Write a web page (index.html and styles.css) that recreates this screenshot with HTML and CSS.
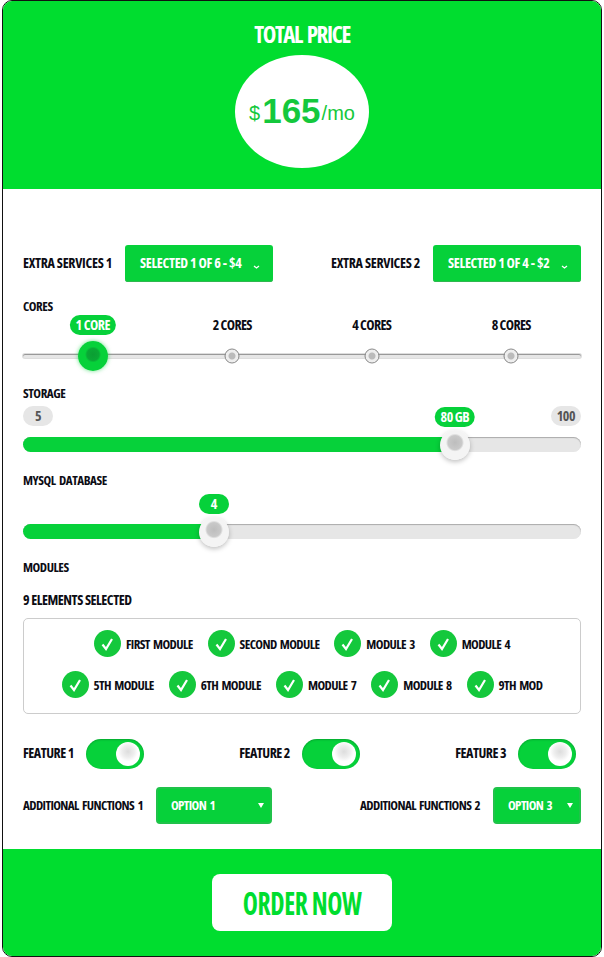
FILE: index.html
```html
<!DOCTYPE html>
<html lang="en">
<head>
    <meta charset="UTF-8">
    <meta name="viewport" content="width=device-width, initial-scale=1.0">
    <title>Total Price</title>
    <link rel="stylesheet" href="styles.css">
</head>
<body>
    <div class="card">
        <header class="top">
            <h1>Total Price</h1>
            <div class="price"><span class="unit">$</span><strong>165</strong><span class="unit">/mo</span></div>
        </header>

        <main class="content">
            <div class="row services">
                <div class="field">
                    <span class="label">Extra Services 1</span>
                    <button class="dropdown" type="button"><span>Selected 1 of 6 - $4</span>
                        <svg width="7" height="4" viewBox="0 0 7 4"><path d="M1 1l2.5 2L6 1" fill="none" stroke="#fff" stroke-width="1.3"/></svg>
                    </button>
                </div>
                <div class="field">
                    <span class="label">Extra Services 2</span>
                    <button class="dropdown" type="button"><span>Selected 1 of 4 - $2</span>
                        <svg width="7" height="4" viewBox="0 0 7 4"><path d="M1 1l2.5 2L6 1" fill="none" stroke="#fff" stroke-width="1.3"/></svg>
                    </button>
                </div>
            </div>

            <div class="label section cores-label">Cores</div>
            <div class="slider thin">
                <div class="track">
                    <span class="pill on" style="left:12.5%">1 Core</span>
                    <span class="tick-text" style="left:37.5%">2 Cores</span>
                    <span class="tick-text" style="left:62.5%">4 Cores</span>
                    <span class="tick-text" style="left:87.5%">8 Cores</span>
                    <span class="tick" style="left:37.5%"></span>
                    <span class="tick" style="left:62.5%"></span>
                    <span class="tick" style="left:87.5%"></span>
                    <span class="handle green" style="left:12.5%"></span>
                </div>
            </div>

            <div class="label section storage-label">Storage</div>
            <div class="slider">
                <div class="track">
                    <span class="fill" style="width:77.4%"></span>
                    <span class="pill min">5</span>
                    <span class="pill max">100</span>
                    <span class="pill on" style="left:77.4%">80 GB</span>
                    <span class="handle" style="left:77.4%"></span>
                </div>
            </div>

            <div class="label section mysql-label">MySQL Database</div>
            <div class="slider">
                <div class="track">
                    <span class="fill" style="width:34.2%"></span>
                    <span class="pill on" style="left:34.2%">4</span>
                    <span class="handle" style="left:34.2%"></span>
                </div>
            </div>

            <div class="label section modules-label">Modules</div>
            <div class="label section count-label">9 Elements Selected</div>
            <div class="modules">
                <div class="module-row">
                    <label class="module"><svg class="check" viewBox="0 0 27 27"><circle cx="13.5" cy="13.5" r="13.5"/><path d="M8.5 14.5l3.5 4.5 6-10"/></svg>First Module</label>
                    <label class="module"><svg class="check" viewBox="0 0 27 27"><circle cx="13.5" cy="13.5" r="13.5"/><path d="M8.5 14.5l3.5 4.5 6-10"/></svg>Second Module</label>
                    <label class="module"><svg class="check" viewBox="0 0 27 27"><circle cx="13.5" cy="13.5" r="13.5"/><path d="M8.5 14.5l3.5 4.5 6-10"/></svg>Module 3</label>
                    <label class="module"><svg class="check" viewBox="0 0 27 27"><circle cx="13.5" cy="13.5" r="13.5"/><path d="M8.5 14.5l3.5 4.5 6-10"/></svg>Module 4</label>
                </div>
                <div class="module-row">
                    <label class="module"><svg class="check" viewBox="0 0 27 27"><circle cx="13.5" cy="13.5" r="13.5"/><path d="M8.5 14.5l3.5 4.5 6-10"/></svg>5th Module</label>
                    <label class="module"><svg class="check" viewBox="0 0 27 27"><circle cx="13.5" cy="13.5" r="13.5"/><path d="M8.5 14.5l3.5 4.5 6-10"/></svg>6th Module</label>
                    <label class="module"><svg class="check" viewBox="0 0 27 27"><circle cx="13.5" cy="13.5" r="13.5"/><path d="M8.5 14.5l3.5 4.5 6-10"/></svg>Module 7</label>
                    <label class="module"><svg class="check" viewBox="0 0 27 27"><circle cx="13.5" cy="13.5" r="13.5"/><path d="M8.5 14.5l3.5 4.5 6-10"/></svg>Module 8</label>
                    <label class="module"><svg class="check" viewBox="0 0 27 27"><circle cx="13.5" cy="13.5" r="13.5"/><path d="M8.5 14.5l3.5 4.5 6-10"/></svg>9th Mod</label>
                </div>
            </div>

            <div class="row features">
                <div class="field"><span class="label">Feature 1</span><span class="toggle"></span></div>
                <div class="field"><span class="label">Feature 2</span><span class="toggle"></span></div>
                <div class="field"><span class="label">Feature 3</span><span class="toggle"></span></div>
            </div>

            <div class="row functions">
                <div class="field"><span class="label">Additional Functions 1</span><button class="select wide" type="button">Option 1</button></div>
                <div class="field"><span class="label">Additional Functions 2</span><button class="select" type="button">Option 3</button></div>
            </div>
        </main>

        <footer class="bottom">
            <button class="order" type="button"><span>Order Now</span></button>
        </footer>
    </div>
</body>
</html>
```

FILE: styles.css
```css
body {
    margin: 0;
    background-color: #fff;
    font-family: "Open Sans", "Liberation Sans", Arial, sans-serif;
    font-stretch: 75%;
    color: #0c0c14;
}

button {
    font-stretch: 75%;
}

.card {
    box-sizing: border-box;
    width: 600px;
    height: 957px;
    margin-left: 2px;
    display: flex;
    flex-direction: column;
    border: 1px solid #111;
    border-radius: 10px;
    overflow: hidden;
}

.top {
    height: 188px;
    background-color: #00dd2f;
    text-align: center;
}

h1 {
    margin: 0;
    padding-top: 18px;
    font-size: 23px;
    line-height: 30px;
    letter-spacing: -1.4px;
    word-spacing: 2px;
    text-transform: uppercase;
    color: #fff;
}

.price {
    box-sizing: border-box;
    width: 134px;
    height: 113px;
    margin: 6px auto 0;
    padding-bottom: 2px;
    display: flex;
    align-items: center;
    justify-content: center;
    border-radius: 50%;
    background-color: #fff;
    color: #14c83c;
    font-family: "Liberation Sans", Arial, sans-serif;
}

.price strong {
    font-size: 35px;
    margin: 0 1px 0 2px;
}

.price .unit {
    font-size: 20px;
    margin-top: 5px;
}

.content {
    flex: 1;
    padding: 56px 20px 0;
}

.row {
    display: flex;
    justify-content: space-between;
    align-items: center;
}

.field {
    display: flex;
    align-items: center;
}

.label {
    font-size: 14px;
    line-height: 16px;
    font-weight: bold;
    letter-spacing: -0.3px;
    text-transform: uppercase;
    white-space: nowrap;
}

.field .label {
    padding-bottom: 2px;
}

.services .label {
    margin-right: 13px;
}

.dropdown {
    width: 148px;
    height: 37px;
    padding: 0 13px 2px 15px;
    display: flex;
    align-items: center;
    justify-content: space-between;
    border: none;
    border-radius: 3px;
    background-color: #06d13a;
    box-shadow: inset 0 -1px 0 #2fb84f;
    color: #fff;
    font-family: inherit;
    font-size: 14px;
    font-weight: bold;
    letter-spacing: -0.3px;
    text-transform: uppercase;
    white-space: nowrap;
}

.dropdown svg {
    margin-top: 8px;
}

.cores-label,
.storage-label,
.mysql-label,
.modules-label {
    font-size: 13px;
    letter-spacing: -0.45px;
    word-spacing: 1.5px;
}

.cores-label {
    margin-top: 16px;
}

.storage-label {
    margin-top: 10px;
}

.mysql-label {
    margin-top: 20px;
}

.modules-label {
    margin-top: 20px;
}

.count-label {
    margin-top: 17px;
    letter-spacing: -0.45px;
}

.slider {
    padding-top: 36px;
}

.slider.thin {
    padding-top: 40px;
    padding-bottom: 17px;
}

.track {
    position: relative;
    height: 15px;
    border-radius: 8px;
    background-color: #e6e6e6;
    box-shadow: inset 0 1px 1px #aaa;
}

.thin .track {
    height: 4px;
    box-shadow: inset 0 1px 0 #999, 0 0 0 1px #ddd;
}

.fill {
    display: block;
    height: 100%;
    border-radius: 8px 0 0 8px;
    background-color: #06d13a;
}

.pill {
    position: absolute;
    bottom: 25px;
    transform: translateX(-50%);
    min-width: 30px;
    box-sizing: border-box;
    height: 20px;
    padding: 0 6px;
    border-radius: 10px;
    background-color: #e6e6e6;
    color: #555;
    font-size: 14px;
    font-weight: bold;
    line-height: 20px;
    letter-spacing: -0.5px;
    text-align: center;
    text-transform: uppercase;
    white-space: nowrap;
}

.pill.on {
    background-color: #06d13a;
    color: #fff;
}

.thin .pill {
    bottom: 23px;
}

.pill.min {
    left: 0;
    bottom: 26px;
    transform: none;
}

.pill.max {
    right: 0;
    bottom: 26px;
    transform: none;
}

.tick-text {
    position: absolute;
    bottom: 25px;
    transform: translateX(-50%);
    font-size: 14px;
    font-weight: bold;
    line-height: 16px;
    letter-spacing: -0.6px;
    text-transform: uppercase;
    white-space: nowrap;
}

.tick {
    position: absolute;
    top: 2px;
    width: 15px;
    height: 15px;
    box-sizing: border-box;
    transform: translate(-50%, -50%);
    border: 1px solid #888;
    border-radius: 50%;
    background: radial-gradient(circle, #bbb 0 3px, #eee 4px);
}

.handle {
    position: absolute;
    top: 50%;
    width: 30px;
    height: 30px;
    transform: translate(-50%, -50%);
    border-radius: 50%;
    background: radial-gradient(circle at 50% 42%, #bdbdbd 0, #c9c9c9 7px, #f4f4f4 9px);
    box-shadow: 0 2px 5px rgba(0, 0, 0, 0.25);
}

.handle.green {
    background: radial-gradient(circle at 50% 45%, #0b9e33 0, #0aa835 6px, #06d13a 8px);
    box-shadow: 0 0 4px rgba(6, 209, 58, 0.6);
}

.modules {
    box-sizing: border-box;
    height: 96px;
    margin-top: 10px;
    padding-top: 11px;
    border: 1px solid #ccc;
    border-radius: 5px;
}

.module-row {
    display: flex;
    justify-content: center;
    gap: 15px;
    margin-bottom: 14px;
}

.module {
    display: flex;
    align-items: center;
    gap: 5px;
    font-size: 13px;
    font-weight: bold;
    letter-spacing: -0.6px;
    word-spacing: 1.5px;
    text-transform: uppercase;
    white-space: nowrap;
}

.check {
    width: 27px;
    height: 27px;
}

.check circle {
    fill: #14c83c;
}

.check path {
    fill: none;
    stroke: #fff;
    stroke-width: 2.2;
}

.features {
    margin-top: 25px;
    padding-right: 5px;
}

.features .label {
    margin-right: 12px;
    letter-spacing: -0.5px;
}

.toggle {
    position: relative;
    display: block;
    width: 58px;
    height: 30px;
    border-radius: 15px;
    background-color: #06d13a;
    box-shadow: inset 0 1px 2px rgba(0, 0, 0, 0.2);
}

.toggle::after {
    content: "";
    position: absolute;
    top: 3px;
    right: 4px;
    width: 24px;
    height: 24px;
    border-radius: 50%;
    background: radial-gradient(circle at 50% 40%, #ddd 0, #eee 6px, #fff 10px);
}

.functions {
    margin-top: 18px;
}

.functions .label {
    margin-right: 13px;
    font-size: 13px;
    letter-spacing: -0.6px;
    word-spacing: 1.5px;
}

.select {
    position: relative;
    width: 88px;
    height: 37px;
    padding: 0 0 2px 13px;
    border: 2px solid #20c24a;
    border-radius: 4px;
    background-color: #06d13a;
    color: #fff;
    font-family: inherit;
    font-size: 13px;
    font-weight: bold;
    letter-spacing: -0.6px;
    word-spacing: 1.5px;
    text-align: left;
    text-transform: uppercase;
}

.select.wide {
    width: 116px;
}

.select::after {
    content: "";
    position: absolute;
    top: 14px;
    right: 6px;
    border-style: solid;
    border-width: 5px 3px 0;
    border-color: #fff transparent transparent;
}

.bottom {
    height: 107px;
    padding: 25px 0 0;
    box-sizing: border-box;
    background-color: #00dd2f;
    text-align: center;
}

.order {
    width: 180px;
    height: 57px;
    padding-bottom: 2px;
    border: none;
    border-radius: 8px;
    background-color: #fff;
    color: #00dd2f;
    font-family: inherit;
    font-size: 32px;
    font-weight: bold;
    letter-spacing: -0.5px;
    text-transform: uppercase;
    white-space: nowrap;
}

.order span {
    display: inline-block;
    transform: scaleX(0.8);
}
```
